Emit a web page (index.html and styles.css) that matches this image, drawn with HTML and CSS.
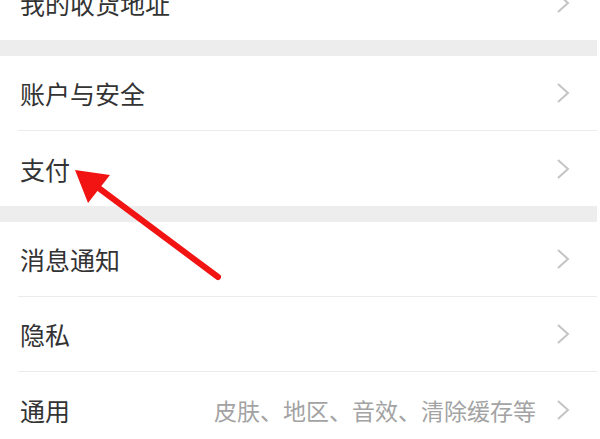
FILE: index.html
```html
<!DOCTYPE html>
<html lang="zh-CN">
<head>
    <meta charset="UTF-8">
    <meta name="viewport" content="width=device-width, initial-scale=1.0">
    <title>设置</title>
    <link rel="stylesheet" href="styles.css">
</head>
<body>
    <div class="settings">
        <div class="group">
            <div class="item">
                <span class="label">我的收货地址</span>
                <span class="chevron"><svg width="14" height="22" viewBox="0 0 14 22"><polyline points="2,2 12,11 2,20"/></svg></span>
            </div>
        </div>
        <div class="group">
            <div class="item">
                <span class="label">账户与安全</span>
                <span class="chevron"><svg width="14" height="22" viewBox="0 0 14 22"><polyline points="2,2 12,11 2,20"/></svg></span>
            </div>
            <div class="item">
                <span class="label">支付</span>
                <span class="chevron"><svg width="14" height="22" viewBox="0 0 14 22"><polyline points="2,2 12,11 2,20"/></svg></span>
            </div>
        </div>
        <div class="group">
            <div class="item">
                <span class="label">消息通知</span>
                <span class="chevron"><svg width="14" height="22" viewBox="0 0 14 22"><polyline points="2,2 12,11 2,20"/></svg></span>
            </div>
            <div class="item">
                <span class="label">隐私</span>
                <span class="chevron"><svg width="14" height="22" viewBox="0 0 14 22"><polyline points="2,2 12,11 2,20"/></svg></span>
            </div>
            <div class="item">
                <span class="label">通用</span>
                <span class="hint">皮肤、地区、音效、清除缓存等</span>
                <span class="chevron"><svg width="14" height="22" viewBox="0 0 14 22"><polyline points="2,2 12,11 2,20"/></svg></span>
            </div>
        </div>
    </div>

    <!-- red pointer drawn over the screenshot -->
    <svg class="pointer" width="600" height="439" viewBox="0 0 600 439">
        <line x1="218" y1="277" x2="100" y2="189" />
        <polygon points="75,170 110,175 88,203" />
    </svg>
</body>
</html>
```

FILE: styles.css
```css
body {
    margin: 0;
    background-color: #fff;
    font-family: "Noto Sans CJK SC", "Noto Sans", sans-serif;
    position: relative;
    overflow: hidden;
}

.settings {
    width: 597px;
    margin-top: -35px;
}

.group {
    background-color: #fff;
}

.group + .group {
    border-top: 16px solid #ededed;
}

.item {
    height: 75px;
    box-sizing: border-box;
    margin-left: 18px;
    padding: 0 27px 0 2px;
    display: flex;
    align-items: center;
}

.item:not(:last-child) {
    border-bottom: 1px solid #ebebeb;
}

.label {
    font-size: 25px;
    color: #333;
    flex: 1;
}

.hint {
    font-size: 23px;
    color: #a3a3a3;
    margin-right: 20px;
}

.chevron {
    display: flex;
}

.chevron polyline {
    fill: none;
    stroke: #c4c4c4;
    stroke-width: 2;
}

.pointer {
    position: absolute;
    left: 0;
    top: 0;
}

.pointer line {
    stroke: #f21313;
    stroke-width: 6;
    stroke-linecap: round;
}

.pointer polygon {
    fill: #f21313;
}
```
